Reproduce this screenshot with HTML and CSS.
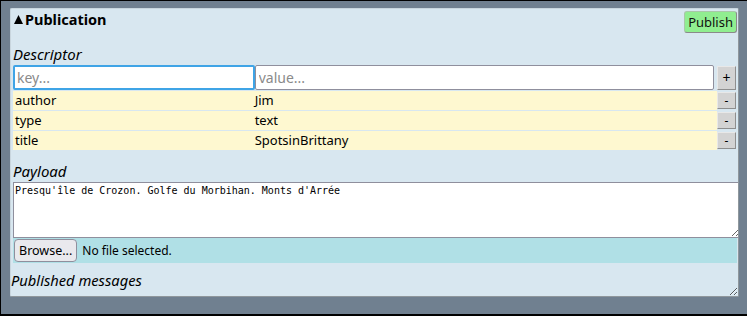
FILE: index.html
```html
<!DOCTYPE html>
<html>
<head>
    <title>Publication</title>
    <link rel="stylesheet" href="styles.css">
</head>
<body>
    <div class="frame">
        <div class="panel">
            <div class="head">
                <div class="title">
                    <svg class="arrow" width="9" height="9" viewBox="0 0 9 9"><polygon points="4.5,0 9,9 0,9" fill="#000"/></svg>Publication
                </div>
                <button type="button" class="publish-btn">Publish</button>
            </div>
            <div class="label">Descriptor</div>
            <div class="descriptor">
                <div class="add-row">
                    <input type="text" class="key-input" placeholder="key...">
                    <input type="text" class="value-input" placeholder="value...">
                    <button type="button" class="small-btn add-btn">+</button>
                </div>
                <div class="entry">
                    <div class="cell key">author</div>
                    <div class="cell value">Jim</div>
                    <button type="button" class="small-btn">-</button>
                </div>
                <div class="entry">
                    <div class="cell key">type</div>
                    <div class="cell value">text</div>
                    <button type="button" class="small-btn">-</button>
                </div>
                <div class="entry">
                    <div class="cell key">title</div>
                    <div class="cell value">SpotsinBrittany</div>
                    <button type="button" class="small-btn">-</button>
                </div>
            </div>
            <div class="label payload-label">Payload</div>
            <textarea class="payload">Presqu'île de Crozon. Golfe du Morbihan. Monts d'Arrée</textarea>
            <div class="file-row">
                <button type="button" class="browse-btn">Browse...</button>
                <span class="file-name">No file selected.</span>
            </div>
            <div class="label published">Published messages</div>
        </div>
    </div>
</body>
</html>
```

FILE: styles.css
```css
html, body {
    margin: 0;
    padding: 0;
    background-color: #000;
}
body {
    width: 747px;
    height: 316px;
    font-family: "Noto Sans", "DejaVu Sans", sans-serif;
    font-size: 13px;
    color: #000;
}
.frame {
    box-sizing: border-box;
    width: 747px;
    height: 313px;
    margin-top: 1px;
    margin-left: 1px;
    padding: 7px 0 0 9px;
    background-color: #708090;
}
.panel {
    box-sizing: border-box;
    width: 729px;
    height: 289px;
    padding: 2px 2px 0 2px;
    background-color: #d8e7f0;
    border: 1px solid #c9d6de;
    border-right-color: #8f979c;
    border-bottom-color: #8f979c;
    border-radius: 2px;
    resize: both;
    overflow: hidden;
}
.head {
    display: flex;
    justify-content: space-between;
    align-items: flex-start;
    height: 33px;
}
.title {
    display: flex;
    align-items: center;
    gap: 2px;
    margin-left: 1px;
    font-weight: bold;
    font-size: 14.5px;
    line-height: 16px;
}
.arrow {
    margin-top: 1px;
}
.publish-btn {
    height: 22px;
    margin-right: -1px;
    padding: 0 3px;
    font-family: inherit;
    font-size: 13px;
    background-color: #90ee90;
    border: 1px solid #a8c8a8;
    border-right-color: #8a8a8a;
    border-bottom-color: #8a8a8a;
    border-radius: 3px;
    color: #111;
}
.label {
    font-style: italic;
    font-size: 15px;
    line-height: 20px;
}
.descriptor {
    display: flex;
    flex-direction: column;
    gap: 1px;
    margin-top: 1px;
}
.add-row, .entry {
    display: flex;
    align-items: stretch;
}
.add-row {
    height: 25px;
}
.key-input, .value-input {
    box-sizing: border-box;
    height: 100%;
    margin: 0;
    padding: 0 3px;
    font-family: inherit;
    font-size: 14px;
    background: #fff;
    outline: none;
}
.key-input {
    width: 242px;
    padding-left: 2px;
    border: 2px solid #3fa4e6;
    border-radius: 2px;
}
.value-input {
    width: 460px;
    border: 1px solid #8f8f9d;
    border-radius: 2px;
}
.key-input::placeholder, .value-input::placeholder {
    color: #8a8a8a;
}
.entry {
    height: 19px;
}
.cell {
    background-color: #fef8d0;
    line-height: 19px;
}
.key {
    width: 240px;
    padding-left: 2px;
}
.value {
    width: 463px;
}
.small-btn {
    box-sizing: border-box;
    width: 19px;
    margin: 1px 0 1px 0;
    padding: 0;
    font-family: inherit;
    font-size: 12px;
    line-height: 1;
    background-color: #d3d3d3;
    border: 1px solid #e8e8e8;
    border-right-color: #8e8e8e;
    border-bottom-color: #8e8e8e;
    color: #000;
}
.add-btn {
    margin: 1px 0 0 3px;
    font-size: 14px;
}
.payload-label {
    margin-top: 11px;
    margin-bottom: 1px;
}
.payload {
    display: block;
    box-sizing: border-box;
    width: 728px;
    height: 56px;
    margin: 0;
    padding: 2px 1px;
    font-family: "DejaVu Sans Mono", "Liberation Mono", monospace;
    font-size: 10px;
    border: 1px solid #8f8f9d;
    resize: both;
}
.file-row {
    display: flex;
    align-items: center;
    gap: 5px;
    width: 724px;
    height: 25px;
    background-color: #b0e0e6;
}
.browse-btn {
    height: 23px;
    margin-left: 1px;
    padding: 0 4px;
    font-family: inherit;
    font-size: 12.5px;
    background-color: #e9e9ed;
    border: 1px solid #8f8f9d;
    border-radius: 4px;
    color: #000;
}
.file-name {
    font-size: 12px;
}
.published {
    margin-top: 7px;
    margin-left: -2px;
    font-size: 14.7px;
}
```
